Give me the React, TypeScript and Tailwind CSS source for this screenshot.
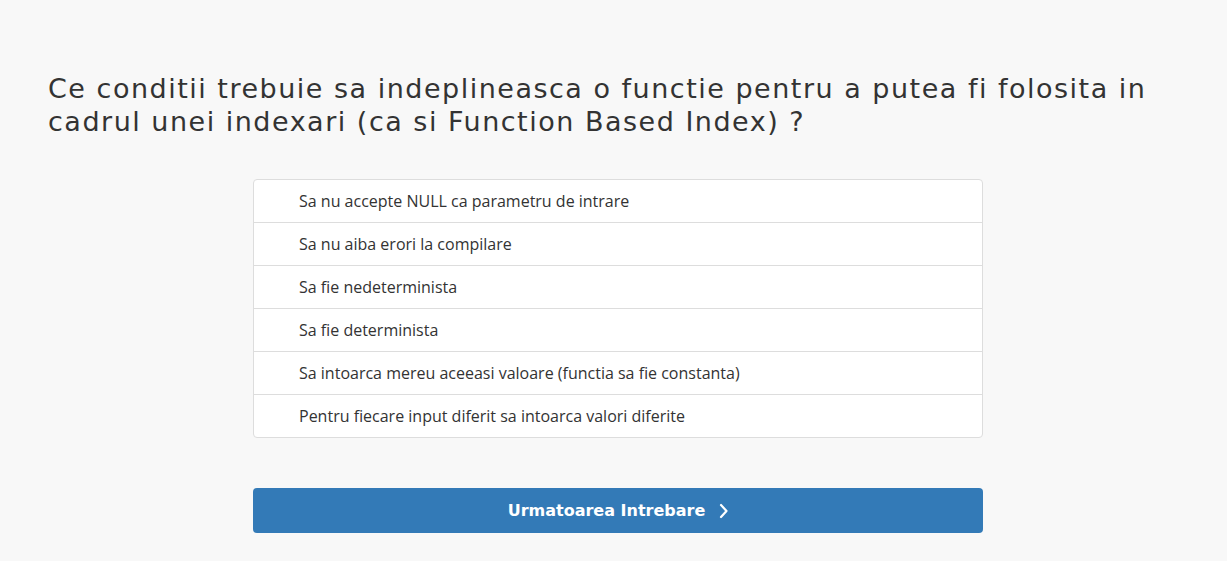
import React from "react";

const options = [
  "Sa nu accepte NULL ca parametru de intrare",
  "Sa nu aiba erori la compilare",
  "Sa fie nedeterminista",
  "Sa fie determinista",
  "Sa intoarca mereu aceeasi valoare (functia sa fie constanta)",
  "Pentru fiecare input diferit sa intoarca valori diferite",
];

export default function App() {
  return (
    <div className="min-h-screen w-full bg-[#f8f8f8] pt-[72px]">
      <h1
        className="pl-[48px] pr-[40px] text-[27px] leading-[33px] tracking-[1.5px] text-[#333333] font-normal"
        style={{ fontFamily: '"DejaVu Sans", "Open Sans", sans-serif' }}
      >
        Ce conditii trebuie sa indeplineasca o functie pentru a putea fi folosita in cadrul unei indexari (ca si Function Based Index) ?
      </h1>
      <div className="ml-[253px] mt-[41px] w-[730px]">
        <div
          className="rounded-[4px] border border-[#dddddd] bg-white"
          style={{ fontFamily: '"Open Sans", sans-serif' }}
        >
          {options.map((o, i) => (
            <div
              key={i}
              className={`flex items-center pl-[45px] text-[16px] text-[#333333] ${i > 0 ? "h-[43px] border-t border-[#dddddd]" : "h-[42px]"}`}
            >
              {o}
            </div>
          ))}
        </div>
        <button
          className="mt-[50px] flex h-[45px] w-full items-center justify-center gap-[14px] rounded-[4px] bg-[#337ab7] text-[16px] font-bold text-white"
          style={{ fontFamily: '"DejaVu Sans", sans-serif' }}
        >
          <span>Urmatoarea Intrebare</span>
          <svg width="9" height="16" viewBox="0 0 9 16" fill="none">
            <path d="M2 2 L7.5 8 L2 14" stroke="white" strokeWidth="2.2" strokeLinecap="round" strokeLinejoin="round" />
          </svg>
        </button>
      </div>
    </div>
  );
}
